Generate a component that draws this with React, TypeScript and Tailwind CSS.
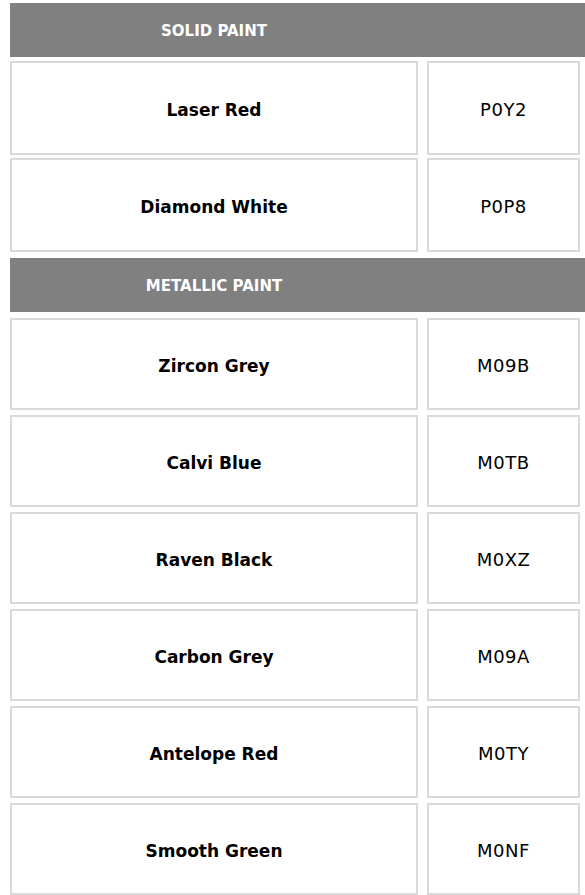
const solid = [
  { name: "Laser Red", code: "P0Y2" },
  { name: "Diamond White", code: "P0P8" },
];

const metallic = [
  { name: "Zircon Grey", code: "M09B" },
  { name: "Calvi Blue", code: "M0TB" },
  { name: "Raven Black", code: "M0XZ" },
  { name: "Carbon Grey", code: "M09A" },
  { name: "Antelope Red", code: "M0TY" },
  { name: "Smooth Green", code: "M0NF" },
];

type Paint = { name: string; code: string };

const Header = ({ label }: { label: string }) => (
  <div className="flex h-[54px] w-[580px] items-center bg-[#808080] pt-[2px]">
    <span className="w-[408px] text-center font-['DejaVu_Sans',sans-serif] text-[15px] font-bold text-white">
      {label}
    </span>
  </div>
);

const Row = ({ p, h }: { p: Paint; h: string }) => (
  <div className="flex gap-[9px]">
    <div
      className={`flex ${h} w-[408px] items-center justify-center border-2 border-[#dadada] bg-white pt-[5px] font-['DejaVu_Sans',sans-serif] text-[17px] font-bold text-black`}
    >
      {p.name}
    </div>
    <div
      className={`flex ${h} w-[153px] items-center justify-center border-2 border-[#dadada] bg-white pt-[2px] font-['DejaVu_Sans',sans-serif] text-[18px] tracking-[0.5px] text-black`}
    >
      {p.code}
    </div>
  </div>
);

export default function App() {
  return (
    <div className="h-[895px] w-[585px] overflow-hidden bg-white pl-[10px] pt-[3px]">
      <Header label="SOLID PAINT" />
      <div className="mt-[4px] flex flex-col gap-[3px]">
        {solid.map((p) => (
          <Row key={p.code} p={p} h="h-[94px]" />
        ))}
      </div>
      <div className="mt-[6px]">
        <Header label="METALLIC PAINT" />
      </div>
      <div className="mt-[6px] flex flex-col gap-[5px]">
        {metallic.map((p) => (
          <Row key={p.code} p={p} h="h-[92px]" />
        ))}
      </div>
    </div>
  );
}
